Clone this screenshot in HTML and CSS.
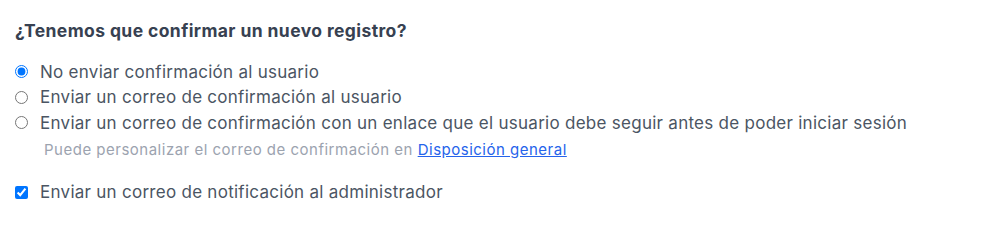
FILE: index.html
```html
<!DOCTYPE html>
<html lang="es">
<head>
<meta charset="utf-8">
<link rel="stylesheet" href="styles.css">
</head>
<body>
<div class="panel">
  <h3 class="title">¿Tenemos que confirmar un nuevo registro?</h3>
  <div class="options">
    <label class="option"><input type="radio" name="confirm" checked><span>No enviar confirmación al usuario</span></label>
    <label class="option"><input type="radio" name="confirm"><span>Enviar un correo de confirmación al usuario</span></label>
    <label class="option"><input type="radio" name="confirm"><span>Enviar un correo de confirmación con un enlace que el usuario debe seguir antes de poder iniciar sesión</span></label>
    <p class="help">Puede personalizar el correo de confirmación en <a href="#">Disposición general</a></p>
  </div>
  <label class="option check"><input type="checkbox" checked><span>Enviar un correo de notificación al administrador</span></label>
</div>
</body>
</html>
```
FILE: styles.css
```css
html, body {
  margin: 0;
  padding: 0;
  background: #ffffff;
}
body {
  font-family: Inter, "Noto Sans", sans-serif;
  color: #4b5563;
}
.panel {
  padding: 20px 15px 0 15px;
}
.title {
  margin: 0 0 17px 0;
  font-size: 17.5px;
  line-height: 22px;
  font-weight: 700;
  letter-spacing: 0.4px;
  color: #374151;
}
.options {
  display: flex;
  flex-direction: column;
}
.option {
  display: flex;
  align-items: center;
  gap: 12px;
  font-size: 17px;
  letter-spacing: 0.27px;
  line-height: 22px;
  height: 25.5px;
}
.option input {
  margin: 0;
  width: 13px;
  height: 13px;
  flex: none;
}
.help {
  margin: 4px 0 0 29px;
  font-size: 15px;
  letter-spacing: 0.5px;
  line-height: 20px;
  color: #9ca3af;
}
.help a {
  color: #2563eb;
  text-decoration: underline;
}
.check {
  margin-top: 20px;
}
```
